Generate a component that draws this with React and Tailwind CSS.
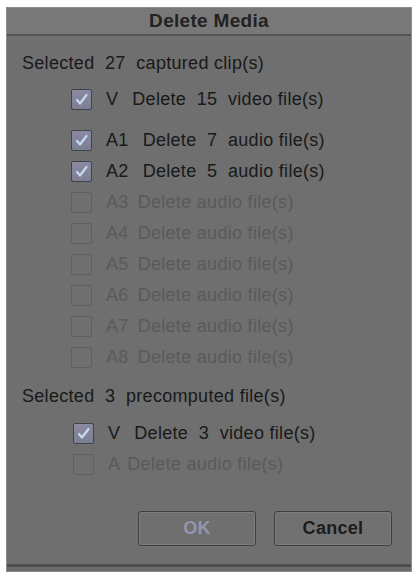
import React from "react";

const clipRows = [
  { label: "V", text: "Delete  15  video file(s)", checked: true },
  { label: "A1", text: "Delete  7  audio file(s)", checked: true, gapTop: true },
  { label: "A2", text: "Delete  5  audio file(s)", checked: true },
  { label: "A3", text: "Delete audio file(s)" },
  { label: "A4", text: "Delete audio file(s)" },
  { label: "A5", text: "Delete audio file(s)" },
  { label: "A6", text: "Delete audio file(s)" },
  { label: "A7", text: "Delete audio file(s)" },
  { label: "A8", text: "Delete audio file(s)" },
];

function Checkbox({ checked }) {
  if (!checked) {
    return (
      <span className="w-[21px] h-[21px] shrink-0 rounded-[2px] border-[1.5px] border-[#5f5f5f]" />
    );
  }
  return (
    <span className="w-[21px] h-[21px] shrink-0 rounded-[2px] border-[1.5px] border-[#42424a] bg-gradient-to-b from-[#8a8aa2] to-[#7c7f92] flex items-center justify-center">
      <svg width="15" height="15" viewBox="0 0 15 15" fill="none">
        <path
          d="M3 8 L6 11.5 L12.5 3"
          stroke="#c3dcf2"
          strokeWidth="2.2"
          strokeLinecap="round"
          strokeLinejoin="round"
        />
      </svg>
    </span>
  );
}

function Row({ label, text, checked, className = "", gap }) {
  const tone = checked ? "text-[#191919]" : "text-[#5a5a5a]";
  const textGap = gap ?? (checked ? "ml-[14px]" : "ml-[9px]");
  return (
    <div className={`h-[31px] flex items-center pl-[64px] ${className}`}>
      <Checkbox checked={checked} />
      <span className={`ml-[14px] whitespace-pre ${tone}`}>{label}</span>
      <span className={`${textGap} whitespace-pre ${tone}`}>{text}</span>
    </div>
  );
}

export default function App() {
  return (
    <div
      className="w-[417px] h-[576px] bg-white pt-[7px] pl-[6px]"
      style={{ fontFamily: '"Liberation Sans", Arial, sans-serif' }}
    >
      <div className="w-[406px] h-[565px] bg-[#6f6f6f] border border-[#8c8c8c] flex flex-col text-[18px] tracking-[0.3px]">
        <div className="h-[28px] shrink-0 bg-[#787878] border-b-2 border-[#545454] flex items-center justify-center text-[19px] font-bold text-[#222]">
          Delete Media
        </div>

        <div className="h-[31px] mt-[12px] flex items-center pl-[15px] whitespace-pre text-[#191919]">
          Selected  27  captured clip(s)
        </div>

        <div className="mt-[5px] mr-[70px] border-r border-[#727272]">
          {clipRows.map((r) => (
            <Row
              key={r.label}
              {...r}
              className={r.gapTop ? "mt-[10px]" : ""}
            />
          ))}
        </div>

        <div className="h-[31px] mt-[8px] flex items-center pl-[15px] whitespace-pre text-[#191919]">
          Selected  3  precomputed file(s)
        </div>

        <Row
          label="V"
          text="Delete  3  video file(s)"
          checked
          className="mt-[6px] pl-[66px]"
        />
        <Row
          label="A"
          text="Delete audio file(s)"
          className="pl-[66px]"
          gap="ml-[7px]"
        />

        <div className="mt-[31px] flex justify-end gap-[18px] pr-[19px]">
          <button className="w-[118px] h-[35px] rounded-[3px] border-[1.5px] border-[#3f3f3f] bg-[#6f6f6f] shadow-[inset_0_0_0_1px_#7d7d7d] text-[18px] font-bold text-[#9496ae]">
            OK
          </button>
          <button className="w-[118px] h-[35px] rounded-[3px] border-[1.5px] border-[#3f3f3f] bg-[#717171] shadow-[inset_0_0_0_1px_#7d7d7d] text-[18px] font-bold text-[#1c1c1c]">
            Cancel
          </button>
        </div>

        <div className="mt-auto h-[7px] border-t-[3px] border-[#4e4e4e] bg-[#6a6a6a]" />
      </div>
    </div>
  );
}
